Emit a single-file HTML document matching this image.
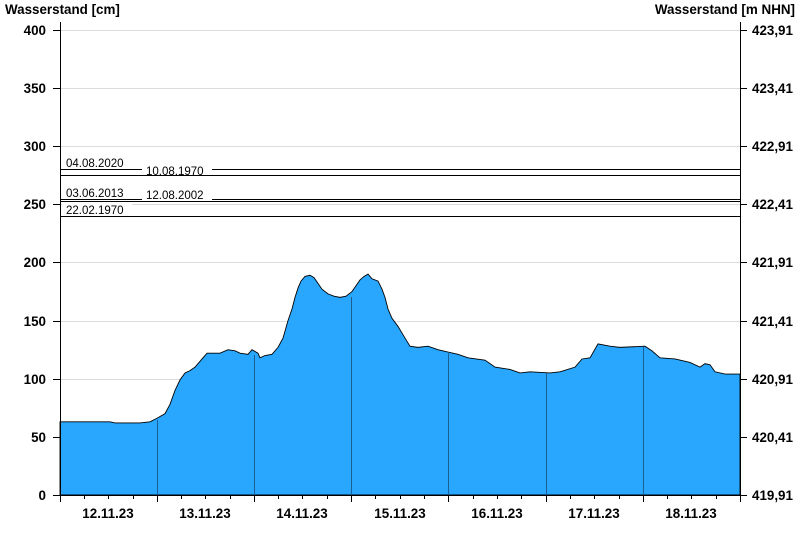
<!DOCTYPE html>
<html><head><meta charset="utf-8"><style>
html,body{margin:0;padding:0;background:#fff;}
svg{display:block;font-family:"Liberation Sans",Arial,sans-serif;}
</style></head><body>
<svg width="800" height="550" viewBox="0 0 800 550" xmlns="http://www.w3.org/2000/svg">
<g font-weight="bold" font-size="13.4" fill="#000">
<text x="5" y="14">Wasserstand [cm]</text>
<text x="795" y="14" text-anchor="end">Wasserstand [m NHN]</text>
</g>
<g stroke="#dcdcdc" stroke-width="1">
<line x1="60" y1="30.5" x2="740" y2="30.5"/><line x1="60" y1="88.5" x2="740" y2="88.5"/>
<line x1="60" y1="146.5" x2="740" y2="146.5"/><line x1="60" y1="204.5" x2="740" y2="204.5"/>
<line x1="60" y1="262.5" x2="740" y2="262.5"/><line x1="60" y1="321.5" x2="740" y2="321.5"/>
<line x1="60" y1="379.5" x2="740" y2="379.5"/><line x1="60" y1="437.5" x2="740" y2="437.5"/>
</g>
<g transform="translate(0,495) scale(1,-1.1625)">
<polygon fill="#29a7ff" stroke="#000" stroke-width="0.9" vector-effect="non-scaling-stroke" points="60,0 60,63 110,63 115,62 140,62 150,63 157,66 165,70 170,78 175,90 180,99 185,105 190,107 195,110 200,115 207,122 220,122 228,125 235,124 240,122 248,121 252,125 258,122 260,118 265,120 272,121 278,127 283,135 288,150 292,160 295,170 298,178 301,184 305,188 310,189 314,187 318,182 322,177 328,173 334,171 340,170 346,171 352,175 356,180 360,185 364,188 368,190 372,186 378,184 382,177 385,170 388,160 392,152 398,145 405,135 410,128 418,127 428,128 438,125 448,123 458,121 468,118 485,116 495,110 510,108 520,105 530,106 550,105 560,106 575,110 582,117 590,118 598,130 610,128 620,127 645,128 652,124 660,118 675,117 690,114 700,110 705,113 710,112 715,106 725,104 740,104 740,0"/>
</g>
<g stroke="#1a5f94" stroke-width="1">
<line x1="157.5" y1="420" x2="157.5" y2="495"/><line x1="254.5" y1="355" x2="254.5" y2="495"/>
<line x1="351.5" y1="297" x2="351.5" y2="495"/><line x1="448.5" y1="352" x2="448.5" y2="495"/>
<line x1="546.5" y1="373" x2="546.5" y2="495"/><line x1="643.5" y1="347" x2="643.5" y2="495"/>
</g>
<g stroke="#000" stroke-width="1">
<line x1="60" y1="169.5" x2="740" y2="169.5"/>
<line x1="60" y1="175.5" x2="740" y2="175.5"/>
<line x1="60" y1="199.5" x2="740" y2="199.5"/>
<line x1="60" y1="201.5" x2="740" y2="201.5"/>
<line x1="60" y1="216.5" x2="740" y2="216.5"/>
</g>
<g fill="#fff">
<rect x="142" y="164" width="70" height="11"/>
<rect x="142" y="194" width="70" height="6"/>
<rect x="62" y="203" width="70" height="13"/>
</g>
<g font-size="11.5" fill="#000">
<text x="66" y="167">04.08.2020</text>
<text x="146" y="175">10.08.1970</text>
<text x="66" y="197">03.06.2013</text>
<text x="146" y="199">12.08.2002</text>
<text x="66" y="214">22.02.1970</text>
</g>
<g stroke="#000" stroke-width="1">
<line x1="60.5" y1="22" x2="60.5" y2="495"/>
<line x1="740.5" y1="22" x2="740.5" y2="495"/>
<line x1="60" y1="495.5" x2="741" y2="495.5"/>
<path d="M53 30.5h7M53 88.5h7M53 146.5h7M53 204.5h7M53 262.5h7M53 321.5h7M53 379.5h7M53 437.5h7M53 495.5h7"/>
<path d="M741 30.5h6M741 88.5h6M741 146.5h6M741 204.5h6M741 262.5h6M741 321.5h6M741 379.5h6M741 437.5h6M741 495.5h6"/>
<path d="M60.5 495v7M157.5 495v7M254.5 495v7M351.5 495v7M448.5 495v7M546.5 495v7M643.5 495v7M740.5 495v7"/>
<path d="M84.5 495v4M108.5 495v4M133.5 495v4M181.5 495v4M205.5 495v4M230.5 495v4M278.5 495v4M302.5 495v4M327.5 495v4M375.5 495v4M400.5 495v4M424.5 495v4M473.5 495v4M497.5 495v4M521.5 495v4M570.5 495v4M594.5 495v4M619.5 495v4M667.5 495v4M691.5 495v4M716.5 495v4"/>
</g>
<g font-weight="bold" font-size="13.4" fill="#000" text-anchor="end">
<text x="46" y="35">400</text><text x="46" y="93">350</text><text x="46" y="151">300</text>
<text x="46" y="209">250</text><text x="46" y="267">200</text><text x="46" y="326">150</text>
<text x="46" y="384">100</text><text x="46" y="442">50</text><text x="46" y="500">0</text>
</g>
<g font-weight="bold" font-size="13.4" fill="#000">
<text x="752" y="35">423,91</text><text x="752" y="93">423,41</text><text x="752" y="151">422,91</text>
<text x="752" y="209">422,41</text><text x="752" y="267">421,91</text><text x="752" y="326">421,41</text>
<text x="752" y="384">420,91</text><text x="752" y="442">420,41</text><text x="752" y="500">419,91</text>
</g>
<g font-weight="bold" font-size="13.4" fill="#000" text-anchor="middle">
<text x="108" y="518">12.11.23</text><text x="205" y="518">13.11.23</text><text x="302" y="518">14.11.23</text>
<text x="400" y="518">15.11.23</text><text x="497" y="518">16.11.23</text><text x="594" y="518">17.11.23</text>
<text x="691" y="518">18.11.23</text>
</g>
</svg>
</body></html>
